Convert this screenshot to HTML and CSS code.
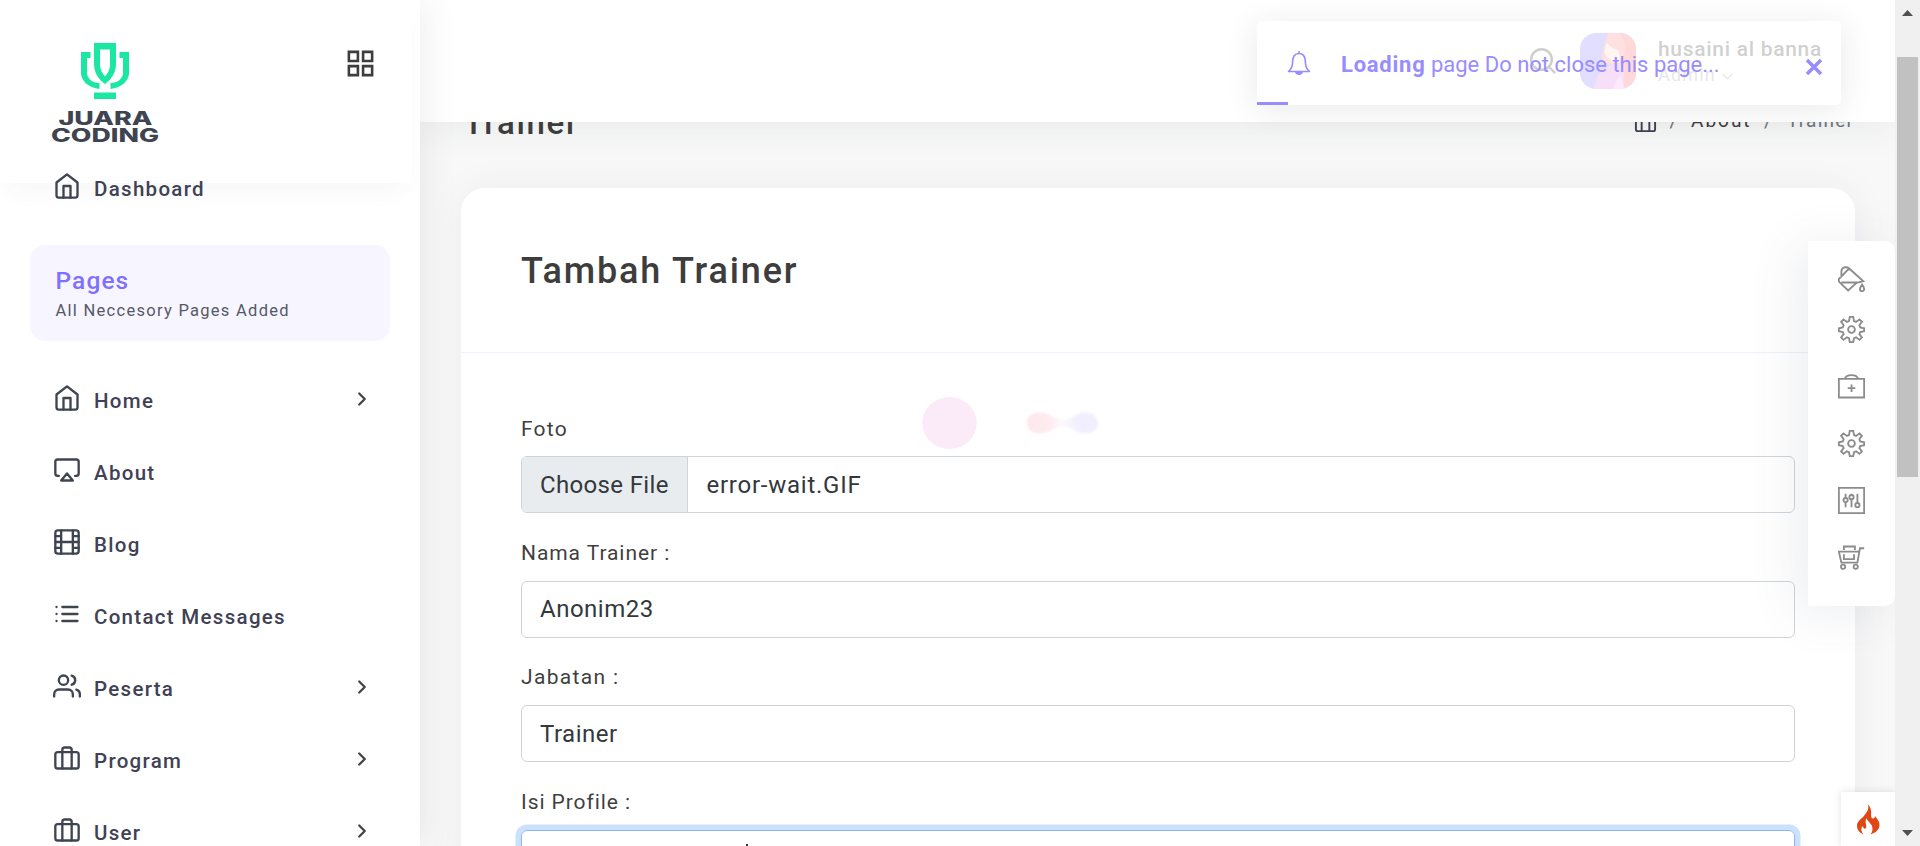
FILE: index.html
```html
<!DOCTYPE html>
<html lang="id">
<head>
<meta charset="utf-8">
<title>Tambah Trainer</title>
<link rel="stylesheet" href="styles.css">
</head>
<body>
<svg class="defs" width="0" height="0">
  <symbol id="home" viewBox="0 0 24 24"><path d="M3 9l9-7 9 7v11a2 2 0 0 1-2 2H5a2 2 0 0 1-2-2z"/><path d="M9 22V12h6v10"/></symbol>
  <symbol id="airplay" viewBox="0 0 24 24"><path d="M5 17H4a2 2 0 0 1-2-2V5a2 2 0 0 1 2-2h16a2 2 0 0 1 2 2v10a2 2 0 0 1-2 2h-1"/><path d="M12 15l5 6H7z"/></symbol>
  <symbol id="film" viewBox="0 0 24 24"><rect x="2" y="2" width="20" height="20" rx="2.2"/><path d="M7 2v20M17 2v20M2 12h20M2 7h5M2 17h5M17 17h5M17 7h5"/></symbol>
  <symbol id="list" viewBox="0 0 24 24"><path d="M8 6h13M8 12h13M8 18h13M3 6h.01M3 12h.01M3 18h.01"/></symbol>
  <symbol id="users" viewBox="0 0 24 24"><path d="M17 21v-2a4 4 0 0 0-4-4H5a4 4 0 0 0-4 4v2"/><circle cx="9" cy="7" r="4"/><path d="M23 21v-2a4 4 0 0 0-3-3.87M16 3.13a4 4 0 0 1 0 7.75"/></symbol>
  <symbol id="case" viewBox="0 0 24 24"><rect x="2" y="7" width="20" height="14" rx="2"/><path d="M16 21V5a2 2 0 0 0-2-2h-4a2 2 0 0 0-2 2v16"/></symbol>
  <symbol id="chev" viewBox="0 0 24 24"><path d="M9 18l6-6-6-6"/></symbol>
  <symbol id="gear" viewBox="0 0 32 32"><path d="M14 1h4l1 5 2.500 1 4-3 2.800 2.800-3 4 1 2.700 4.700 1v3.500l-4.700 1-1 2.500 3 4-2.800 2.800-4-3-2.500 1-1 4.700h-4l-1-4.700-2.500-1-4 3-2.800-2.800 3-4-1-2.500-4.700-1v-3.500l4.700-1 1-2.700-3-4L6.500 4l4 3 2.500-1z"/><circle cx="16" cy="16" r="4"/></symbol>
</svg>
<div class="app">
  <aside class="sidebar">
    <div class="brand">
      <svg class="logo" width="112" height="104" viewBox="0 0 112 104">
        <g fill="#1be7a3">
          <path fill-rule="evenodd" d="M45 1h22v21c0 8-4 15-11 20-7-5-11-12-11-20zM51 7.500v15c0 5 2 8.500 5 12 3-3.500 5-7 5-12v-15z"/>
          <path d="M32 10h9.500v6H38v15c0 5 5 10 12.500 10v6C40 46 32 39 32 31z"/>
          <path d="M80 10h-9.500v6H74v15c0 5-5 10-12.500 10v6C72 46 80 39 80 31z"/>
          <rect x="45" y="50.500" width="22" height="6.500"/>
        </g>
        <g class="logo-text">
          <text x="9.500" y="82.500" textLength="94" lengthAdjust="spacingAndGlyphs">JUARA</text>
          <text x="2" y="99.500" textLength="108" lengthAdjust="spacingAndGlyphs">CODING</text>
        </g>
      </svg>
      <svg class="ico grid-ico" viewBox="0 0 24 24"><path d="M3 3h7v7H3zM14 3h7v7h-7zM14 14h7v7h-7zM3 14h7v7H3z"/></svg>
    </div>
    <nav class="menu">
      <a class="item first"><svg class="ico"><use href="#home"/></svg><span>Dashboard</span></a>
      <div class="group"><strong>Pages</strong><small>All Neccesory Pages Added</small></div>
      <a class="item"><svg class="ico"><use href="#home"/></svg><span>Home</span><svg class="ico chev"><use href="#chev"/></svg></a>
      <a class="item"><svg class="ico"><use href="#airplay"/></svg><span>About</span></a>
      <a class="item"><svg class="ico"><use href="#film"/></svg><span>Blog</span></a>
      <a class="item"><svg class="ico"><use href="#list"/></svg><span>Contact Messages</span></a>
      <a class="item"><svg class="ico"><use href="#users"/></svg><span>Peserta</span><svg class="ico chev"><use href="#chev"/></svg></a>
      <a class="item"><svg class="ico"><use href="#case"/></svg><span>Program</span><svg class="ico chev"><use href="#chev"/></svg></a>
      <a class="item"><svg class="ico"><use href="#case"/></svg><span>User</span><svg class="ico chev"><use href="#chev"/></svg></a>
    </nav>
  </aside>

  <main class="main">
    <header class="topbar">
      <svg class="search" viewBox="0 0 26 26"><circle cx="11.500" cy="11.500" r="10.300"/><path d="M18.500 18.500l6 6"/></svg>
      <svg class="avatar" viewBox="0 0 56 56">
        <rect width="56" height="56" fill="#8577ff"/>
        <path d="M28 0h28v56H40z" fill="#ff5c66"/>
        <path d="M28 0c-3 8-6 20-6 28l9 4 12-8c4-8 2-18-4-24z" fill="#ff7f83"/>
        <path d="M27 10c-2 4-3 10-1 13 3 3 5 2 5 6l9 1c1-6-1-9-2-13-4-1-8-3-11-7z" fill="#ffd9c4"/>
        <path d="M14 56c1-12 8-20 16-23l12-3c4 8 2 18 1 26z" fill="#de7bea"/>
        <path d="M33 56c2-7 5-11 8-14l3 14z" fill="#f2a6f2"/>
      </svg>
      <div class="user"><b>husaini al banna</b><span>Admin <svg class="ico down" viewBox="0 0 12 8"><path d="M1 1l5 5 5-5"/></svg></span></div>
    </header>

    <div class="page-head">
      <h1>Trainer</h1>
      <div class="crumbs"><svg class="ico"><use href="#case"/></svg><i>/</i><span class="link">About</span><i>/</i><span class="here">Trainer</span></div>
    </div>

    <section class="card">
      <div class="card-head"><h2>Tambah Trainer</h2></div>
      <form class="form">
        <label class="l-foto">Foto</label>
        <div class="field file"><span class="choose">Choose File</span><span class="fname">error-wait.GIF</span></div>
        <label>Nama Trainer :</label>
        <div class="field">Anonim23</div>
        <label class="l-jab">Jabatan :</label>
        <div class="field">Trainer</div>
        <label>Isi Profile :</label>
        <div class="field area"><span class="caret"></span></div>
      </form>
    </section>
  </main>

  <div class="scrollbar">
    <svg width="11" height="6" viewBox="0 0 11 6"><path d="M0 6L5.500 0 11 6z"/></svg>
    <div class="thumb"></div>
    <svg width="11" height="6" viewBox="0 0 11 6"><path d="M0 0L5.500 6 11 0z"/></svg>
  </div>
</div>

<svg class="loader" width="180" height="56" viewBox="0 0 180 56">
  <defs>
    <linearGradient id="bow"><stop offset="0" stop-color="#fde7ec"/><stop offset=".3" stop-color="#fdebf0"/><stop offset=".5" stop-color="#fdfafc"/><stop offset=".7" stop-color="#f2f0fe"/><stop offset="1" stop-color="#f1effe"/></linearGradient>
    <filter id="soft"><feGaussianBlur stdDeviation="1.200"/></filter>
  </defs>
  <ellipse cx="29.500" cy="28" rx="27.200" ry="26" fill="#fbebf9"/>
  <path d="M120 17.500c9 0 14 6.500 24 6.500s11-6.500 21-6.500c8 0 13 5 13 10.500s-5 10.500-13 10.500c-10 0-11-6.500-21-6.500s-15 6.500-24 6.500-13-5-13-10.500 4-10.500 13-10.500z" fill="url(#bow)" filter="url(#soft)"/>
</svg>

<div class="tools">
  <svg viewBox="0 0 32 32"><path d="M13 3L1 15.500v3L12 29l10-9 8-2L15 4.500zM4 19.500h19M4 13V7c0-7 9-7 10-2M28.500 22c-1.500 2-2.500 4-2.500 5.500 0 3 5 3 5 0 0-1.500-1-3.500-2.500-5.500z"/></svg>
  <svg><use href="#gear"/></svg>
  <svg viewBox="0 0 32 32"><path d="M1 7h30v22H1zM8 7c2-6 14-6 16 0M16 13.500v9M11.500 18h9"/></svg>
  <svg><use href="#gear"/></svg>
  <svg viewBox="0 0 32 32"><path d="M1 1h30v30H1zM9 8v5M9 18v6M16 8v2M16 14v10M23 8v12"/><circle cx="9" cy="15.500" r="2.500"/><circle cx="16" cy="12" r="2.500"/><circle cx="23" cy="21.500" r="2.500"/></svg>
  <svg viewBox="0 0 32 32"><path d="M31 5h-5l-3 17H4L1 9h24M7 7V3h13v4M7 12v6h12v-6"/><circle cx="6" cy="27" r="2.500"/><circle cx="21" cy="27" r="2.500"/></svg>
</div>

<div class="toast">
  <svg class="bell" viewBox="0 0 24 26"><path d="M12 1v2M1.500 21.500h21c-3-2.500-4-5-4-8.500 0-5.500-1.500-9.500-6.500-9.500S5.500 7.500 5.500 13c0 3.500-1 6-4 8.500z"/><path class="solid" d="M8 22h8c-.5 4-7.500 4-8 0z"/></svg>
  <p><strong>Loading</strong> <span>page Do not close this page...</span></p>
  <svg class="close" viewBox="0 0 18 18"><path d="M2 2l14 14M16 2L2 16"/></svg>
  <div class="bar"></div>
</div>

<div class="debug"><svg width="24" height="31" viewBox="0 0 24 31"><path d="M11.500 0c2.500 5-1 8.500-4 12.500C4 16 1 17.500 1 22c0 4 3 7 6.500 8.500C5 27 4.500 24 7 22c0 2 1 3 2.500 2.500C12 23 8 19 10.500 14c.5 3 4 4.500 5.500 8 1 3 .5 6-1.500 8.500C19 29 23.500 26 23.500 21c0-4-2.500-6-4.500-9 0 1.500-1 3-2.500 2.500C13 13 18 6 11.500 0z" fill="#dd4814"/></svg></div>
</body>
</html>
```
FILE: styles.css
```css
* { box-sizing: border-box; }
body { margin: 0; height: 846px; overflow: hidden; position: relative; background: #f8f8f8; font-family: Roboto, "Liberation Sans", sans-serif; color: #3d3d3d; }
.defs { position: absolute; }
.app { display: flex; height: 846px; }
.ico { width: 28px; height: 28px; flex: none; fill: none; stroke: currentColor; stroke-width: 2; stroke-linecap: round; stroke-linejoin: round; }

.sidebar { width: 420px; flex: none; background: #fff; position: relative; z-index: 3; box-shadow: 0 0 36px rgba(60, 66, 87, .11); }
.brand { height: 183px; width: 412px; padding: 42px 38px 0 49px; display: flex; justify-content: space-between; align-items: flex-start; box-shadow: 0 16px 22px -8px rgba(60, 66, 87, .045); }
.logo-text { font: 800 18.500px Inter, sans-serif; fill: #3f4451; }
.grid-ico { width: 31px; height: 31px; margin-top: 5.500px; margin-right: -1.500px; color: #3d3d3d; stroke-linejoin: miter; }
.menu { margin-top: -33px; display: flex; flex-direction: column; }
.item { height: 72px; padding: 0 44px 0 52.500px; display: flex; align-items: center; color: #3f4254; font-size: 20.500px; font-weight: 500; letter-spacing: 1.300px; }
.item > span { margin-left: 13.500px; padding-top: 6px; flex: 1; }
.item > .ico { stroke: #3f4451; }
.item > .chev { width: 22px; height: 22px; margin: 1.500px 3px 0 0; stroke: #444; stroke-width: 2.500; }
.group { margin: 23px 30px 21px; height: 96px; padding: 21px 25.500px; border-radius: 15px; background: #f7f5ff; display: flex; flex-direction: column; }
.group strong { color: #7f70ff; font-size: 24.500px; line-height: 30px; font-weight: 500; letter-spacing: 1.100px; }
.group small { color: #555966; font-size: 16.500px; line-height: 29px; letter-spacing: 1.280px; }

.main { flex: 1; min-width: 0; overflow: hidden; }
.topbar { height: 122px; background: #fff; position: relative; z-index: 2; display: flex; justify-content: flex-end; align-items: flex-start; padding: 33px 74px 0 0; box-shadow: 0 4px 36px rgba(50, 70, 65, .08); }
.search { width: 26px; height: 26px; margin: 15px 24px 0 0; fill: none; stroke: #333; stroke-width: 2.400; stroke-linecap: round; }
.avatar { width: 56px; height: 56px; border-radius: 16px; margin-right: 22px; }
.user { width: 163px; display: flex; flex-direction: column; white-space: nowrap; }
.user b { font-size: 21px; font-weight: 500; line-height: 30px; margin-top: 1px; letter-spacing: .700px; color: #3d3d3d; }
.user span { font-size: 18px; line-height: 24px; margin-top: -1px; letter-spacing: 1.200px; color: #999; }
.user .down { width: 11px; height: 8px; stroke-width: 1.300; margin-left: 0; }

.page-head { height: 66px; margin-top: -22px; padding: 0 44px 0 43.500px; display: flex; justify-content: space-between; align-items: flex-start; margin-bottom: 22px; }
.page-head h1 { margin: 3px 0 0; font-size: 33px; line-height: 40px; font-weight: 500; letter-spacing: 1.700px; color: #3d3d3d; }
.crumbs { display: flex; align-items: center; height: 41px; font-size: 19px; letter-spacing: 1.500px; }
.crumbs .ico { width: 23px; height: 23px; margin-top: 3px; stroke: #3f4254; }
.crumbs i { font-style: normal; color: #6c757d; width: 34.500px; padding-left: 13px; }
.crumbs .link { width: 60px; letter-spacing: 2px; color: #3d3d3d; }
.crumbs i:nth-of-type(2) { width: 36px; }
.crumbs .here { width: 64px; color: #6c757d; letter-spacing: 1.200px; }

.card { margin: 0 40px 0 41px; height: 720px; background: #fff; border-radius: 24px; box-shadow: 0 0 40px rgba(40, 44, 52, .05); }
.card-head { height: 165px; padding: 61px 60px; border-bottom: 1px solid #ecf3fa; }
.card-head h2 { margin: 0; font-size: 36px; line-height: 44px; font-weight: 500; letter-spacing: 1.850px; color: #3d3d3d; }
.form { padding: 61px 60px 0; display: flex; flex-direction: column; }
.form label { height: 30px; line-height: 28px; font-size: 21px; letter-spacing: .930px; color: #3f3f3f; margin-bottom: 12px; }
.form .l-foto { line-height: 30px; letter-spacing: 1.200px; }
.form .l-jab { letter-spacing: 1.350px; }
.field { height: 57px; border: 1px solid #ced4da; border-radius: 6px; display: flex; align-items: center; padding-left: 18px; margin-bottom: 25.500px; font-size: 24px; color: #33383d; letter-spacing: .500px; }
.file { padding: 0; overflow: hidden; }
.choose { width: 166px; height: 55px; line-height: 57px; padding-left: 18px; letter-spacing: .350px; background: #e9ecef; border-right: 1px solid #ced4da; }
.fname { padding-left: 18.500px; letter-spacing: .750px; }
.area { height: 120px; border-color: #86b7fe; box-shadow: 0 0 0 5.500px #cde0fe; position: relative; }
.caret { position: absolute; left: 224px; top: 13px; width: 2px; height: 20px; background: #33383d; }

.scrollbar { width: 25px; flex: none; position: relative; z-index: 4; background: #f0f0f0; display: flex; flex-direction: column; align-items: center; padding: 10px 0; fill: #505050; }
.thumb { width: 21px; height: 420px; margin: 41px 0 auto; background: #c1c1c1; }

.loader { position: absolute; left: 920px; top: 395px; }

.tools { position: absolute; left: 1808px; top: 241px; width: 87px; height: 365px; z-index: 3; background: #fff; border-radius: 0 10px 10px 0; display: flex; flex-direction: column; align-items: center; padding: 25px 0 0; gap: 30px; box-shadow: -10px 6px 50px rgba(80, 95, 120, .11); clip-path: inset(-80px 0 -80px -80px); }
.tools svg { width: 27px; height: 27px; flex: none; fill: none; stroke: #8c8c8c; stroke-width: 2.200; }
.tools svg:first-child { margin-bottom: -7px; }

.toast { position: absolute; left: 1257px; top: 21px; width: 584px; height: 84px; z-index: 5; background: rgba(255, 255, 255, .76); border-radius: 5px; display: flex; align-items: center; padding: 0 18px 0 30px; color: #978dff; box-shadow: 0 4px 32px rgba(40, 40, 40, .1); }
.toast p { margin: 2px 0 0 30px; flex: 1; font-size: 22px; white-space: nowrap; }
.toast strong { font-weight: 700; letter-spacing: .750px; }
.bell { width: 24px; height: 26px; fill: none; stroke: currentColor; stroke-width: 1.600; stroke-linejoin: round; }
.bell .solid { fill: currentColor; stroke: none; }
.close { width: 18px; height: 18px; margin-top: 8px; stroke: currentColor; stroke-width: 3.500; }
.bar { position: absolute; left: 0; bottom: 0; width: 31px; height: 3px; background: #978dff; }

.debug { position: absolute; left: 1841px; top: 792px; width: 54px; height: 54px; z-index: 3; background: #fff; box-shadow: 0 0 8px rgba(0, 0, 0, .12); padding: 12px 15px; clip-path: inset(-12px 0 0 -12px); }
```
